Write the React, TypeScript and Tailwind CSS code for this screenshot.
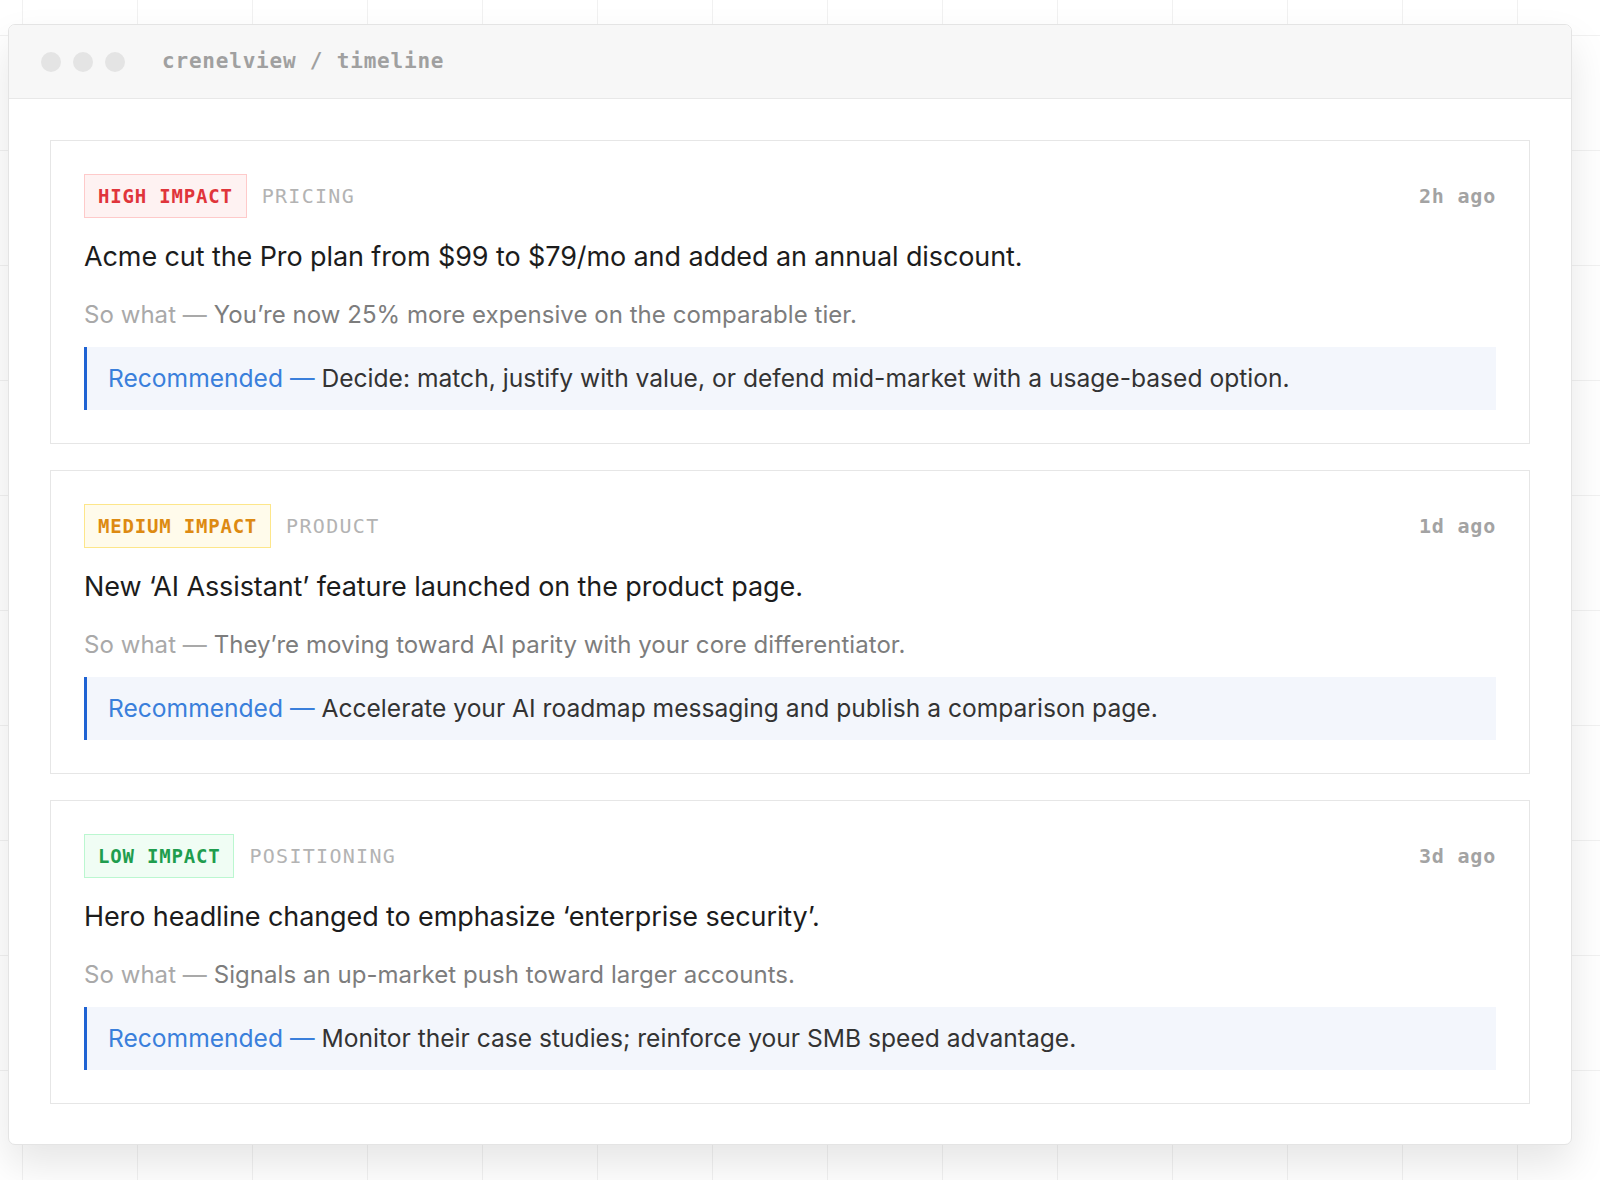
import React from "react";

type Item = {
  level: "high" | "medium" | "low";
  label: string;
  category: string;
  time: string;
  title: string;
  sowhat: string;
  rec: string;
};

const items: Item[] = [
  {
    level: "high",
    label: "HIGH IMPACT",
    category: "PRICING",
    time: "2h ago",
    title: "Acme cut the Pro plan from $99 to $79/mo and added an annual discount.",
    sowhat: "You\u2019re now 25% more expensive on the comparable tier.",
    rec: "Decide: match, justify with value, or defend mid-market with a usage-based option.",
  },
  {
    level: "medium",
    label: "MEDIUM IMPACT",
    category: "PRODUCT",
    time: "1d ago",
    title: "New \u2018AI Assistant\u2019 feature launched on the product page.",
    sowhat: "They\u2019re moving toward AI parity with your core differentiator.",
    rec: "Accelerate your AI roadmap messaging and publish a comparison page.",
  },
  {
    level: "low",
    label: "LOW IMPACT",
    category: "POSITIONING",
    time: "3d ago",
    title: "Hero headline changed to emphasize \u2018enterprise security\u2019.",
    sowhat: "Signals an up-market push toward larger accounts.",
    rec: "Monitor their case studies; reinforce your SMB speed advantage.",
  },
];

const badgeCls: Record<Item["level"], string> = {
  high: "bg-[#fef2f2] border-[#fecaca] text-[#e0353b]",
  medium: "bg-[#fffbeb] border-[#fde68a] text-[#dd8a12]",
  low: "bg-[#f0fdf4] border-[#bbf7d0] text-[#1f9d4e]",
};

const mono = "font-['DejaVu_Sans_Mono','Liberation_Mono',monospace]";

function Card({ it }: { it: Item }) {
  return (
    <div className="border border-[#e6e6e6] bg-white px-[33px] pt-[33px] pb-[33px] flex flex-col">
      <div className="flex items-center h-[44px]">
        <span
          className={`${mono} ${badgeCls[it.level]} border h-[44px] px-[13px] flex items-center text-[19px] leading-none font-bold tracking-[0.8px]`}
        >
          {it.label}
        </span>
        <span className={`${mono} ml-[15px] text-[20px] leading-none tracking-[1.3px] text-[#b3b3b3]`}>
          {it.category}
        </span>
        <span className={`${mono} ml-auto text-[20px] leading-none tracking-[0.8px] text-[#a3a3a3] font-semibold`}>
          {it.time}
        </span>
      </div>
      <div className="mt-[21px] h-[36px] flex items-center text-[27px] leading-[36px] tracking-[-0.1px] text-[#1c1c1c]">
        {it.title}
      </div>
      <div className="mt-[24px] h-[32px] flex items-center text-[24px] leading-[32px] tracking-[0.05px] text-[#7d7d7d]">
        <span className="text-[#a9a9a9]">So what &mdash;&nbsp;</span>
        {it.sowhat}
      </div>
      <div className="mt-[16px] h-[63px] flex items-center border-l-[3px] border-[#1f63d3] bg-[#f3f6fc] pl-[21px] text-[24.6px] tracking-[0px] text-[#333333]">
        <span className="text-[#3a7fdb]">Recommended &mdash;&nbsp;</span>
        {it.rec}
      </div>
    </div>
  );
}

export default function App() {
  return (
    <div
      className="w-[1600px] h-[1180px] overflow-hidden bg-white font-['Inter','Noto_Sans',sans-serif] bg-[linear-gradient(to_right,#f1f1f1_1px,transparent_1px),linear-gradient(to_bottom,#f1f1f1_1px,transparent_1px)] bg-[size:115px_115px] bg-[position:22px_35px] pt-[24px] pl-[8px]"
    >
      <div className="w-[1564px] rounded-[7px] border border-[#e4e4e4] bg-white shadow-[0_20px_40px_rgba(0,0,0,0.1)] overflow-hidden">
        <div className="h-[74px] bg-[#f7f7f7] border-b border-[#e8e8e8] flex items-center pl-[32px]">
          <div className="flex gap-[12px]">
            <span className="w-[20px] h-[20px] rounded-full bg-[#e4e4e4]" />
            <span className="w-[20px] h-[20px] rounded-full bg-[#e4e4e4]" />
            <span className="w-[20px] h-[20px] rounded-full bg-[#e4e4e4]" />
          </div>
          <span className={`${mono} ml-[37px] text-[21px] tracking-[0.8px] text-[#a0a0a0] font-semibold`}>
            crenelview / timeline
          </span>
        </div>
        <div className="p-[41px] pb-[40px] flex flex-col gap-[26px]">
          {items.map((it) => (
            <Card key={it.label} it={it} />
          ))}
        </div>
      </div>
    </div>
  );
}
